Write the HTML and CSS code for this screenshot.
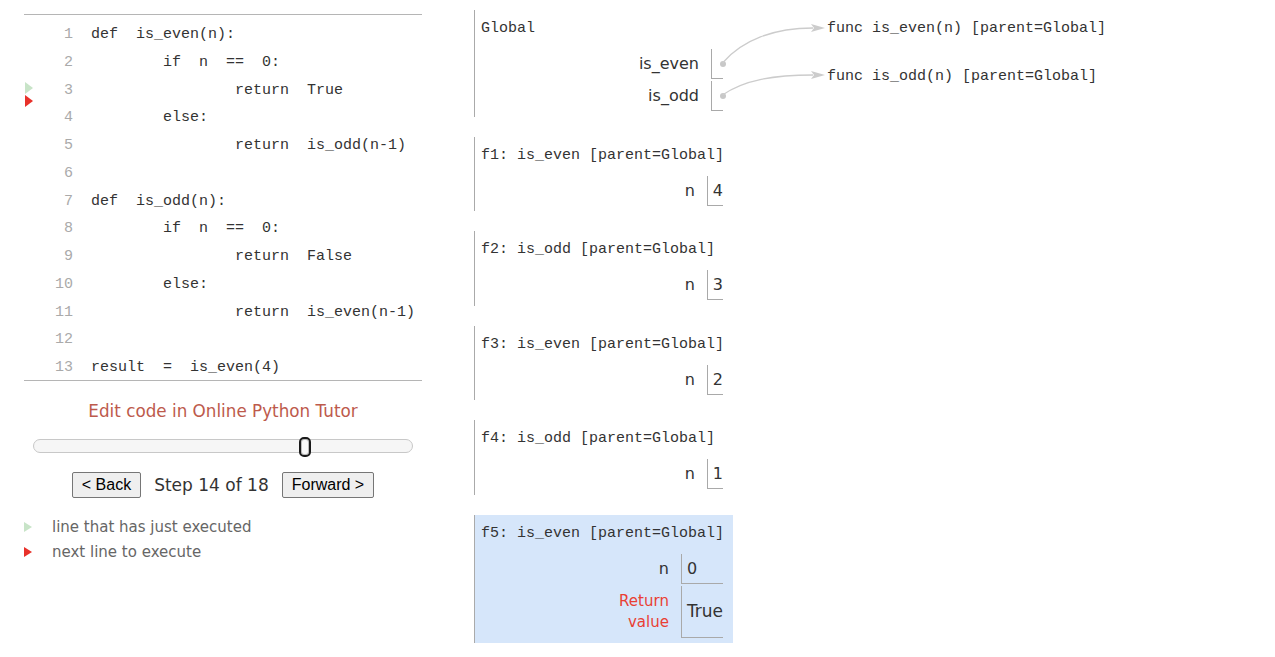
FILE: index.html
```html
<!DOCTYPE html>
<html>
<head>
<meta charset="utf-8">
<link rel="stylesheet" href="styles.css">
</head>
<body>
<div class="page">
  <div class="left">
    <div class="code">
      <div class="line"><span class="gut"></span><span class="num">1</span><span class="src">def  is_even(n):</span></div>
      <div class="line"><span class="gut"></span><span class="num">2</span><span class="src">        if  n  ==  0:</span></div>
      <div class="line"><span class="gut"><span class="tri tri-green cur-prev"></span><span class="tri tri-red cur-next"></span></span><span class="num">3</span><span class="src">                return  True</span></div>
      <div class="line"><span class="gut"></span><span class="num">4</span><span class="src">        else:</span></div>
      <div class="line"><span class="gut"></span><span class="num">5</span><span class="src">                return  is_odd(n-1)</span></div>
      <div class="line"><span class="gut"></span><span class="num">6</span><span class="src"></span></div>
      <div class="line"><span class="gut"></span><span class="num">7</span><span class="src">def  is_odd(n):</span></div>
      <div class="line"><span class="gut"></span><span class="num">8</span><span class="src">        if  n  ==  0:</span></div>
      <div class="line"><span class="gut"></span><span class="num">9</span><span class="src">                return  False</span></div>
      <div class="line"><span class="gut"></span><span class="num">10</span><span class="src">        else:</span></div>
      <div class="line"><span class="gut"></span><span class="num">11</span><span class="src">                return  is_even(n-1)</span></div>
      <div class="line"><span class="gut"></span><span class="num">12</span><span class="src"></span></div>
      <div class="line"><span class="gut"></span><span class="num">13</span><span class="src">result  =  is_even(4)</span></div>
    </div>
    <div class="edit"><a class="edit-link" href="#">Edit code in Online Python Tutor</a></div>
    <div class="slider"><span class="handle"></span></div>
    <div class="nav">
      <button class="btn">&lt; Back</button>
      <span class="step">Step 14 of 18</span>
      <button class="btn">Forward &gt;</button>
    </div>
    <div class="legend">
      <div class="leg-row"><span class="tri tri-green leg-tri"></span><span>line that has just executed</span></div>
      <div class="leg-row"><span class="tri tri-red leg-tri"></span><span>next line to execute</span></div>
    </div>
  </div>

  <div class="viz">
    <div class="stack">
      <div class="frame">
        <div class="ftitle">Global</div>
        <div class="vars">
          <span class="vname">is_even</span><span class="vval ptr"><span class="dot"></span></span>
          <span class="vname">is_odd</span><span class="vval ptr"><span class="dot"></span></span>
        </div>
      </div>
      <div class="frame">
        <div class="ftitle">f1: is_even [parent=Global]</div>
        <div class="vars"><span class="vname">n</span><span class="vval">4</span></div>
      </div>
      <div class="frame">
        <div class="ftitle">f2: is_odd [parent=Global]</div>
        <div class="vars"><span class="vname">n</span><span class="vval">3</span></div>
      </div>
      <div class="frame">
        <div class="ftitle">f3: is_even [parent=Global]</div>
        <div class="vars"><span class="vname">n</span><span class="vval">2</span></div>
      </div>
      <div class="frame">
        <div class="ftitle">f4: is_odd [parent=Global]</div>
        <div class="vars"><span class="vname">n</span><span class="vval">1</span></div>
      </div>
      <div class="frame frame-active">
        <div class="ftitle">f5: is_even [parent=Global]</div>
        <div class="vars">
          <span class="vname">n</span><span class="vval">0</span>
          <span class="vname retname">Return<br>value</span><span class="vval retval">True</span>
        </div>
      </div>
    </div>
    <div class="heap">
      <div class="func">func is_even(n) [parent=Global]</div>
      <div class="func">func is_odd(n) [parent=Global]</div>
    </div>
    <svg class="arrows" width="400" height="120" viewBox="0 0 400 120">
      <path d="M248.5,53 C268,30 300,18 339,18" fill="none" stroke="#cccccc" stroke-width="1.3"/>
      <path d="M351,18 L337,14 L340,18 L337,22 Z" fill="#cccccc"/>
      <path d="M248.5,85 C270,70 300,65 339,65" fill="none" stroke="#cccccc" stroke-width="1.3"/>
      <path d="M351,65 L337,61 L340,65 L337,69 Z" fill="#cccccc"/>
    </svg>
  </div>
</div>
</body>
</html>
```

FILE: styles.css
```css
html, body {
  margin: 0;
  padding: 0;
  background: #ffffff;
}

.page {
  display: flex;
  gap: 52px;
  padding: 10px 0 0 24px;
  font-family: "DejaVu Sans", Verdana, sans-serif;
  color: #333;
}

.left {
  width: 398px;
  margin-top: 4px;
  display: flex;
  flex-direction: column;
}

.code {
  border-top: 1px solid #b5b5b5;
  border-bottom: 1px solid #b5b5b5;
  padding: 4px 0 0 0;
  font-family: "Liberation Mono", "Courier New", monospace;
  font-size: 15px;
}

.line {
  display: flex;
  align-items: flex-start;
  box-sizing: border-box;
  height: 27.75px;
  padding-top: 7px;
  line-height: 18px;
}

.gut {
  position: relative;
  width: 25px;
  flex: none;
}

.num {
  width: 24px;
  flex: none;
  text-align: right;
  color: #aaaaaa;
}

.src {
  padding-left: 18px;
  white-space: pre;
  color: #333333;
}

.tri {
  display: inline-block;
  width: 0;
  height: 0;
  border-top: 6px solid transparent;
  border-bottom: 6px solid transparent;
  border-left: 8px solid #c9e6c9;
}

.tri-green { border-left-color: #c8e4c8; }
.tri-red { border-left-color: #e8312a; }

.cur-prev {
  position: absolute;
  left: 1px;
  top: 0.5px;
}

.cur-next {
  position: absolute;
  left: 1px;
  top: 13.5px;
}

.edit {
  margin-top: 20px;
  text-align: center;
  line-height: 20px;
  font-size: 16.8px;
}

.edit-link {
  color: #bd5a4c;
  text-decoration: none;
}

.slider {
  position: relative;
  margin: 18px 9px 0 9px;
  height: 12px;
  border: 1px solid #c8c8c8;
  border-radius: 7px;
  background: #f6f6f6;
}

.handle {
  position: absolute;
  left: 265px;
  top: -3px;
  width: 8px;
  height: 16px;
  border: 2px solid #1a1a1a;
  border-radius: 5px;
  background: #f8f8f8;
  box-shadow: inset 0 0 0 1px #bbbbbb;
}

.nav {
  margin-top: 19px;
  display: flex;
  justify-content: center;
  align-items: center;
  gap: 13px;
}

.btn {
  font-family: "Liberation Sans", Arial, sans-serif;
  font-size: 16px;
  height: 26px;
  padding: 0 9px;
  border: 1px solid #767676;
  border-radius: 2px;
  background: #efefef;
  color: #000;
}

.step {
  font-size: 17px;
  color: #333;
}

.legend {
  margin-top: 17px;
  font-size: 15px;
  color: #666;
}

.leg-row {
  display: flex;
  align-items: center;
  height: 25px;
  gap: 20px;
}

.leg-tri {
  border-top-width: 5.5px;
  border-bottom-width: 5.5px;
  border-left-width: 8px;
}

.viz {
  position: relative;
  display: flex;
  align-items: flex-start;
}

.stack {
  width: 259px;
  display: flex;
  flex-direction: column;
  gap: 20px;
}

.frame {
  border-left: 1px solid #aaaaaa;
  padding: 10px 10px 5.5px 6px;
}

.frame-active {
  background: #d6e6fa;
}

.ftitle {
  font-family: "Liberation Mono", "Courier New", monospace;
  font-size: 15px;
  line-height: 18px;
  color: #333;
  white-space: pre;
}

.vars {
  margin-top: 11px;
  display: grid;
  grid-template-columns: auto auto;
  justify-content: end;
  row-gap: 2px;
}

.vname {
  align-self: center;
  text-align: right;
  padding-right: 12px;
  font-size: 16px;
  line-height: 20px;
  color: #333;
}

.retname {
  color: #e93f34;
  font-size: 15px;
  line-height: 21px;
}

.vval {
  border-left: 1px solid #a9a9a9;
  border-bottom: 1px solid #a9a9a9;
  height: 29px;
  line-height: 29px;
  padding-left: 5px;
  font-size: 16px;
  color: #333;
}

.retval {
  height: 51px;
  line-height: 51px;
  font-size: 17px;
}

.ptr {
  width: 11px;
  padding-left: 0;
  display: flex;
  align-items: center;
}

.dot {
  display: block;
  width: 6px;
  height: 6px;
  margin-left: 8px;
  flex: none;
  border-radius: 50%;
  background: #c8c8c8;
}

.heap {
  margin-left: 94px;
  padding-top: 10px;
  display: flex;
  flex-direction: column;
  gap: 30px;
}

.func {
  font-family: "Liberation Mono", "Courier New", monospace;
  font-size: 15px;
  line-height: 18px;
  color: #333;
  white-space: pre;
}

.arrows {
  position: absolute;
  left: 0;
  top: 0;
  pointer-events: none;
}
```
